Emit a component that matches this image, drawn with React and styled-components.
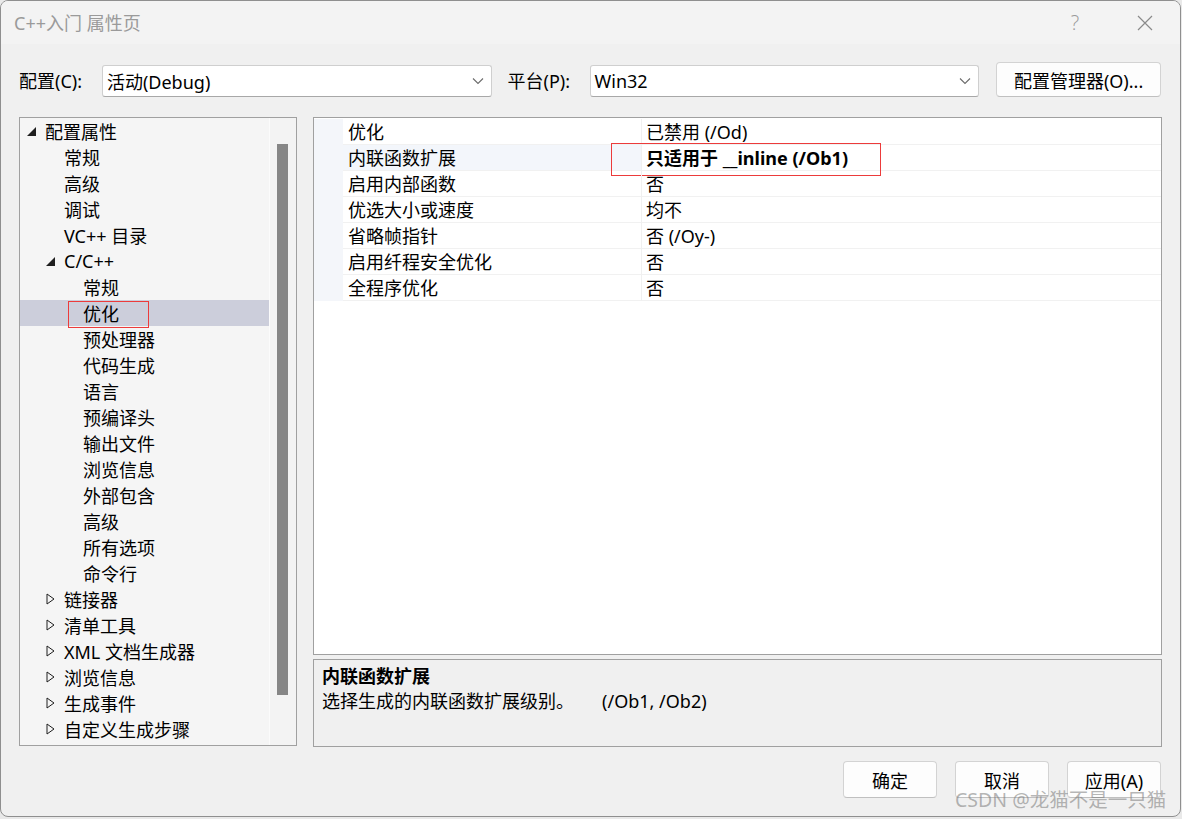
import React from "react";
import styled, { createGlobalStyle } from "styled-components";

const Global = createGlobalStyle`
  html, body { margin: 0; padding: 0; background: #e9e9e9; }
  body { font-family: "Noto Sans", "Noto Sans CJK SC", sans-serif; }
  * { box-sizing: border-box; }
`;

const Window = styled.div`
  position: relative;
  width: 1181px;
  height: 817px;
  border: 1px solid #8f8f8f;
  border-radius: 8px;
  background: #f0f0f0;
  overflow: hidden;
  display: flex;
  flex-direction: column;
  font-size: 18px;
  color: #000;
`;

const TitleBar = styled.div`
  height: 43px;
  background: #f3f3f3;
  display: flex;
  align-items: center;
  padding: 0 0 0 13px;
`;

const Title = styled.div`
  flex: 1;
  color: #9a9a9a;
  font-size: 18px;
  line-height: 24px;
`;

const TitleButton = styled.div`
  width: 70px;
  height: 43px;
  display: flex;
  align-items: center;
  justify-content: center;
  color: #9a9a9a;
  font-size: 20px;
  font-family: "Open Sans", sans-serif;
  font-weight: 300;
`;

const Body = styled.div`
  flex: 1;
  display: flex;
  flex-direction: column;
  padding: 18px 19px 0 18px;
`;

const ConfigRow = styled.div`
  display: flex;
  align-items: flex-end;
  height: 35px;
`;

const Label = styled.div`
  line-height: 32px;
  height: 32px;
  width: ${(p) => p.$w}px;
  margin-right: ${(p) => p.$mr || 0}px;
  white-space: nowrap;
`;

const Select = styled.div`
  width: 390px;
  height: 32px;
  background: #fff;
  border: 1px solid #cfcfcf;
  border-bottom-color: #a8a8a8;
  border-radius: 3px;
  display: flex;
  align-items: center;
  padding-left: 4px;
  margin-right: ${(p) => p.$mr || 0}px;
  white-space: nowrap;
`;

const SelectText = styled.span`
  flex: 1;
`;

const Chevron = styled.svg`
  margin-right: 7px;
`;

const Button = styled.div`
  width: ${(p) => p.$w}px;
  height: ${(p) => p.$h}px;
  background: #fdfdfd;
  border: 1px solid #d3d3d3;
  border-bottom-color: #c0c0c0;
  border-radius: 4px;
  display: flex;
  align-items: center;
  justify-content: center;
  white-space: nowrap;
`;

const Main = styled.div`
  display: grid;
  grid-template-columns: 278px 849px;
  column-gap: 16px;
  margin-top: 20px;
  height: 631px;
`;

const TreePanel = styled.div`
  height: 629px;
  border: 1px solid #a0a0a0;
  background: #f5f5f5;
  display: flex;
`;

const TreeList = styled.div`
  flex: 1;
  display: flex;
  flex-direction: column;
`;

const TreeRow = styled.div`
  position: relative;
  height: 26px;
  display: flex;
  align-items: center;
  padding-left: ${(p) => 7 + p.$level * 19}px;
  background: ${(p) => (p.$selected ? "#cccedb" : "transparent")};
  white-space: nowrap;
`;

const Twisty = styled.div`
  width: 18px;
  height: 26px;
  display: flex;
  align-items: center;
`;

const RedBox = styled.div`
  position: absolute;
  left: ${(p) => p.$l}px;
  top: ${(p) => p.$t}px;
  width: ${(p) => p.$w}px;
  height: ${(p) => p.$h}px;
  border: 1px solid #ec3b3b;
  pointer-events: none;
`;

const ScrollTrack = styled.div`
  width: 27px;
  border-left: 1px solid #fbfbfb;
  background: #f3f3f3;
  padding: 26px 8px 50px 7px;
  display: flex;
`;

const Thumb = styled.div`
  flex: 1;
  background: #868686;
`;

const RightCol = styled.div`
  display: flex;
  flex-direction: column;
  gap: 4px;
`;

const Grid = styled.div`
  height: 538px;
  border: 1px solid #a0a0a0;
  background: #fff;
  padding-top: 1px;
`;

const GridRow = styled.div`
  display: grid;
  grid-template-columns: 29px 298px 1fr;
  height: 26px;
`;

const Gutter = styled.div`
  background: #f4f6fa;
`;

const NameCell = styled.div`
  background: ${(p) => (p.$hl ? "#f3f6fb" : "#fff")};
  border-bottom: 1px solid #f1f1f1;
  padding: 2px 0 0 5px;
  line-height: 23px;
  white-space: nowrap;
`;

const ValueCell = styled.div`
  position: relative;
  border-left: 1px solid #f0f0f0;
  border-bottom: 1px solid #f1f1f1;
  padding: 2px 0 0 4px;
  line-height: 23px;
  font-weight: ${(p) => (p.$bold ? 700 : 400)};
  white-space: nowrap;
`;

const Desc = styled.div`
  height: 88px;
  border: 1px solid #a0a0a0;
  background: #f0f0f0;
  padding: 4px 8px;
  line-height: 25px;
`;

const DescTitle = styled.div`
  font-weight: 700;
`;

const DescText = styled.div`
  white-space: pre;
`;

const ButtonRow = styled.div`
  display: flex;
  justify-content: flex-end;
  gap: 18px;
  margin-top: 13px;
`;

const Watermark = styled.div`
  position: absolute;
  left: 954px;
  top: 787px;
  font-size: 19.5px;
  line-height: 24px;
  color: rgba(120, 120, 120, 0.55);
  white-space: nowrap;
  pointer-events: none;
`;

const ChevronIcon = () => (
  <Chevron width="12" height="8" viewBox="0 0 12 8">
    <polyline points="1,1.5 6,6.5 11,1.5" fill="none" stroke="#6b6b6b" strokeWidth="1.1" />
  </Chevron>
);

const Expanded = () => (
  <svg width="9" height="9" viewBox="0 0 9 9">
    <polygon points="9,0 9,9 0,9" fill="#1e1e1e" />
  </svg>
);

const Collapsed = () => (
  <svg width="9" height="12" viewBox="0 0 9 12">
    <polygon points="1,1 8,6 1,11" fill="none" stroke="#1e1e1e" strokeWidth="1" />
  </svg>
);

const tree = [
  { t: "配置属性", l: 0, s: "open" },
  { t: "常规", l: 1 },
  { t: "高级", l: 1 },
  { t: "调试", l: 1 },
  { t: "VC++ 目录", l: 1 },
  { t: "C/C++", l: 1, s: "open" },
  { t: "常规", l: 2 },
  { t: "优化", l: 2, sel: true },
  { t: "预处理器", l: 2 },
  { t: "代码生成", l: 2 },
  { t: "语言", l: 2 },
  { t: "预编译头", l: 2 },
  { t: "输出文件", l: 2 },
  { t: "浏览信息", l: 2 },
  { t: "外部包含", l: 2 },
  { t: "高级", l: 2 },
  { t: "所有选项", l: 2 },
  { t: "命令行", l: 2 },
  { t: "链接器", l: 1, s: "closed" },
  { t: "清单工具", l: 1, s: "closed" },
  { t: "XML 文档生成器", l: 1, s: "closed" },
  { t: "浏览信息", l: 1, s: "closed" },
  { t: "生成事件", l: 1, s: "closed" },
  { t: "自定义生成步骤", l: 1, s: "closed" },
];

const props = [
  { n: "优化", v: "已禁用 (/Od)" },
  { n: "内联函数扩展", v: "只适用于 __inline (/Ob1)", bold: true, hl: true },
  { n: "启用内部函数", v: "否" },
  { n: "优选大小或速度", v: "均不" },
  { n: "省略帧指针", v: "否 (/Oy-)" },
  { n: "启用纤程安全优化", v: "否" },
  { n: "全程序优化", v: "否" },
];

export default function App() {
  return (
    <>
      <Global />
      <Window>
        <TitleBar>
          <Title>C++入门 属性页</Title>
          <TitleButton>?</TitleButton>
          <TitleButton>
            <svg width="16" height="16" viewBox="0 0 16 16">
              <path d="M1 1 L15 15 M15 1 L1 15" stroke="#8a8a8a" strokeWidth="1.2" />
            </svg>
          </TitleButton>
        </TitleBar>
        <Body>
          <ConfigRow>
            <Label $w={83}>配置(C):</Label>
            <Select $mr={16}>
              <SelectText>活动(Debug)</SelectText>
              <ChevronIcon />
            </Select>
            <Label $w={82}>平台(P):</Label>
            <Select $mr={17}>
              <SelectText>Win32</SelectText>
              <ChevronIcon />
            </Select>
            <Button $w={165} $h={35}>配置管理器(O)...</Button>
          </ConfigRow>
          <Main>
            <TreePanel>
              <TreeList>
                {tree.map((it, i) => (
                  <TreeRow key={i} $level={it.l} $selected={it.sel}>
                    <Twisty>
                      {it.s === "open" && <Expanded />}
                      {it.s === "closed" && <Collapsed />}
                    </Twisty>
                    {it.t}
                    {it.sel && <RedBox $l={48} $t={1} $w={81} $h={27} />}
                  </TreeRow>
                ))}
              </TreeList>
              <ScrollTrack>
                <Thumb />
              </ScrollTrack>
            </TreePanel>
            <RightCol>
              <Grid>
                {props.map((p, i) => (
                  <GridRow key={i}>
                    <Gutter />
                    <NameCell $hl={p.hl}>{p.n}</NameCell>
                    <ValueCell $bold={p.bold}>
                      {p.v}
                      {p.hl && <RedBox $l={-31} $t={-2} $w={270} $h={33} />}
                    </ValueCell>
                  </GridRow>
                ))}
              </Grid>
              <Desc>
                <DescTitle>内联函数扩展</DescTitle>
                <DescText>{"选择生成的内联函数扩展级别。      (/Ob1, /Ob2)"}</DescText>
              </Desc>
            </RightCol>
          </Main>
          <ButtonRow>
            <Button $w={94} $h={37}>确定</Button>
            <Button $w={94} $h={37}>取消</Button>
            <Button $w={94} $h={37}>应用(A)</Button>
          </ButtonRow>
        </Body>
        <Watermark>CSDN @龙猫不是一只猫</Watermark>
      </Window>
    </>
  );
}
